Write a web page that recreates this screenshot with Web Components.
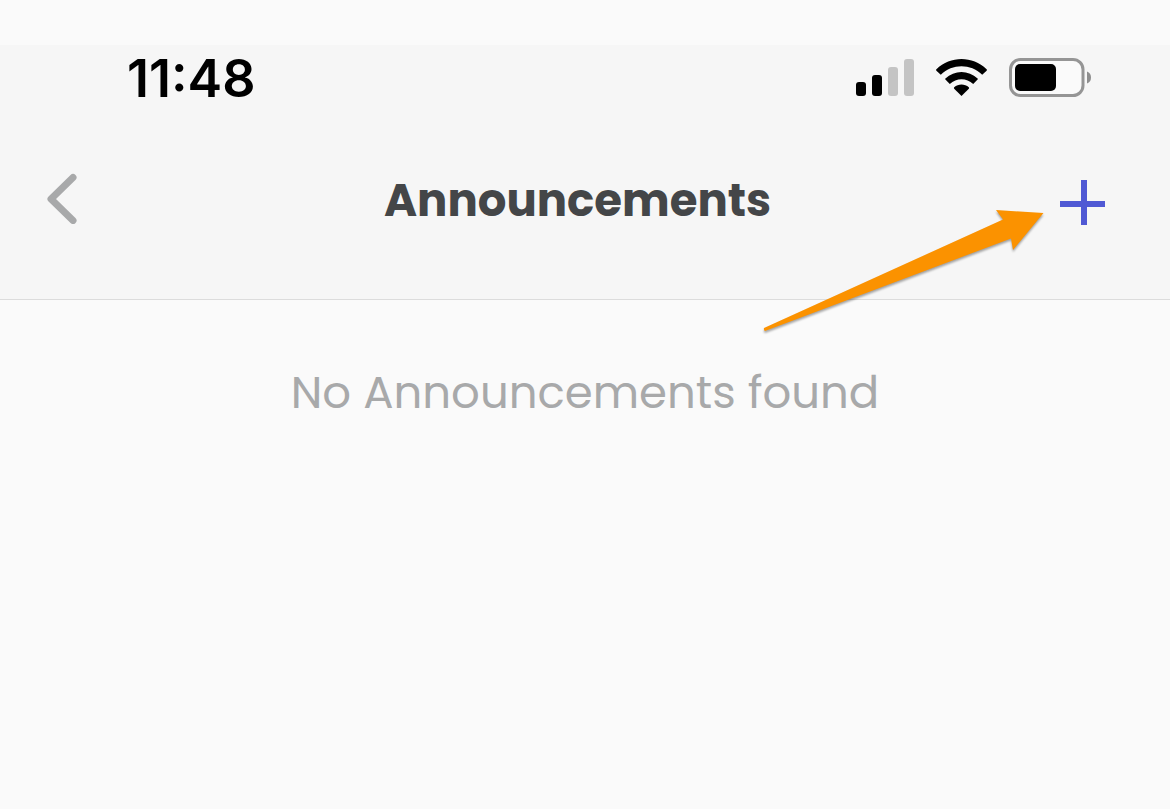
<!DOCTYPE html>
<html lang="en">
<head>
<meta charset="utf-8">
<meta name="viewport" content="width=device-width, initial-scale=1">
<title>Announcements</title>
<style>
  html, body { margin: 0; }
  body { background: #fafafa; font-family: Poppins, Inter, sans-serif; }
</style>
</head>
<body>
<app-screen>
  <status-bar slot="header" time="11:48"></status-bar>
  <nav-bar slot="header">Announcements</nav-bar>
  <empty-state>No Announcements found</empty-state>
</app-screen>

<script>
class BaseElement extends HTMLElement {
  constructor() {
    super();
    this.attachShadow({ mode: "open" }).innerHTML = this.constructor.markup;
  }
}

customElements.define("app-screen", class extends BaseElement {
  static markup = `
    <style>
      :host { display: flex; flex-direction: column; min-height: 100vh; box-sizing: border-box; padding-top: 45px; background: #fafafa; }
      header { background: #f6f6f6; border-bottom: 1px solid #dcdcdc; }
      main { flex: 1; }
    </style>
    <header><slot name="header"></slot></header>
    <main><slot></slot></main>`;
});

customElements.define("status-bar", class extends BaseElement {
  static markup = `
    <style>
      :host { display: flex; align-items: center; justify-content: space-between; height: 64px; padding: 0 79px 0 127px; color: #000; }
      time { padding-top: 4px; font: 600 52px/60px Inter, sans-serif; }
      div { display: flex; align-items: center; gap: 22px; }
      svg { display: block; }
    </style>
    <time></time>
    <div>
      <svg width="58" height="38" viewBox="856 58 58 38" role="img" aria-label="Signal">
        <rect x="856" y="82" width="10" height="14" rx="3"/>
        <rect x="872" y="75" width="10" height="21" rx="3"/>
        <rect x="888" y="67" width="10" height="29" rx="3" fill="#c4c4c4"/>
        <rect x="904" y="59" width="10" height="37" rx="3" fill="#c4c4c4"/>
      </svg>
      <svg width="51" height="38" viewBox="936 58 51 38" role="img" aria-label="Wi-Fi">
        <path d="M936.4 69.3C950.5 55.7 972.5 55.7 986.6 69.3Q987.2 70 986.6 70.7L982.2 74.8C970.5 63.5 952.5 63.5 940.8 74.8L936.4 70.7Q935.8 70 936.4 69.3Z"/>
        <path d="M945.4 78.4C954.4 69.7 968.6 69.7 977.6 78.4Q978.2 79 977.6 79.6L973.2 84C966.6 77.7 956.4 77.7 949.8 84L945.4 79.6Q944.8 79 945.4 78.4Z"/>
        <path d="M954.2 87.3C958.3 83.7 964.7 83.7 968.8 87.3Q969.4 88 968.8 88.7L961.5 96L954.2 88.7Q953.6 88 954.2 87.3Z"/>
      </svg>
      <svg width="82" height="39" viewBox="1009 58 82 39" role="img" aria-label="Battery">
        <rect x="1010.5" y="59.5" width="72.5" height="36" rx="10" fill="#fafafa" stroke="#959595" stroke-width="3"/>
        <rect x="1015" y="64" width="41" height="27" rx="5"/>
        <path d="M1087 71.5Q1091 73 1091 77.5T1087 83.5Z" fill="#8e8e8e"/>
      </svg>
    </div>`;
  connectedCallback() {
    this.shadowRoot.querySelector("time").textContent = this.getAttribute("time");
  }
});

customElements.define("nav-bar", class extends BaseElement {
  static markup = `
    <style>
      :host { display: grid; grid-template-columns: 48px 1fr 45px; align-items: center; padding: 54px 65px 66px 47px; }
      h1 { margin: 0; padding-top: 6px; text-align: center; color: #444648; font-size: 45px; line-height: 64px; font-weight: 700; }
      button { display: block; padding: 0; border: 0; background: none; }
      svg { display: block; }
      .action { position: relative; padding-top: 9px; }
      pointer-arrow { position: absolute; right: 61px; top: 39px; }
    </style>
    <button type="button" aria-label="Back">
      <svg width="30" height="52" viewBox="47 172 30 52" fill="none" stroke="#a8a9aa" stroke-width="7" stroke-linecap="round" stroke-linejoin="round">
        <path d="M73 177.5L51 199L73 220.5"/>
      </svg>
    </button>
    <h1><slot></slot></h1>
    <div class="action">
      <button type="button" aria-label="Add announcement">
        <svg width="45" height="45" viewBox="0 0 45 45" fill="#5059d4"><path d="M21 0h6v21h18v6H27v18h-6V27H0v-6h21Z"/></svg>
      </button>
      <pointer-arrow></pointer-arrow>
    </div>`;
});

customElements.define("pointer-arrow", class extends BaseElement {
  static markup = `
    <style>
      :host { display: block; pointer-events: none; }
      svg { display: block; overflow: visible; filter: drop-shadow(0 2px 1px rgb(0 0 0 / .35)); }
    </style>
    <svg width="280" height="122" viewBox="764 210 280 122" fill="#fb9200" aria-hidden="true">
      <path d="M764 328L1003 219.500L996 210L1043.500 213L1013 250L1011 238.500L765 331Q763.500 330 764 328Z"/>
    </svg>`;
});

customElements.define("empty-state", class extends BaseElement {
  static markup = `
    <style>
      :host { display: block; padding: 58px 24px; text-align: center; color: #a8a9aa; }
      p { margin: 0; font-size: 45px; line-height: 70px; }
    </style>
    <p><slot></slot></p>`;
});
</script>
</body>
</html>
